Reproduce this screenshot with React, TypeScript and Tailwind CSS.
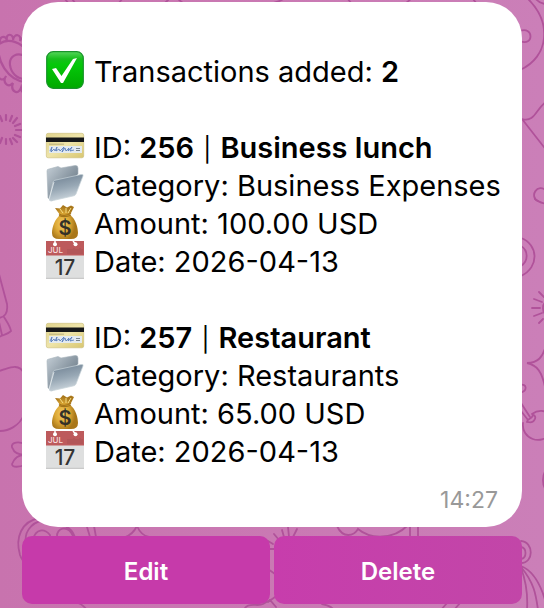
import type { ReactNode } from "react"

type IconName = "card" | "folder" | "bag" | "calendar"

const transactions = [
  { id: "256", name: "Business lunch", category: "Business Expenses", amount: "100.00 USD", date: "2026-04-13" },
  { id: "257", name: "Restaurant", category: "Restaurants", amount: "65.00 USD", date: "2026-04-13" },
]

function Wallpaper() {
  return (
    <svg
      className="absolute inset-0 h-full w-full"
      viewBox="0 0 544 608"
      preserveAspectRatio="none"
      fill="none"
      stroke="#b0529a"
      strokeWidth="1.8"
      strokeLinecap="round"
      aria-hidden="true"
    >
      {/* left side */}
      <path d="M-1 44C7 38 17 41 25 48M-1 44C-4 61 8 80 25 82M25 56C17 52 9 56 10 65C11 73 17 79 25 79" strokeWidth="2.2" />
      <path d="M0 43C-1 36 5 35 7 40C5 33 14 33 13 40C14 33 22 34 20 41C22 36 26 38 26 42M-2 72C-3 80 4 82 6 76C2 82 8 89 13 83C10 91 18 96 21 88C22 94 26 93 26 89" strokeWidth="2.2" />
      <path d="M6 115V120M12 116L10 121M17 118L13 123M20 124L15 126M22 130H16M20 137L15 135M17 142L13 138M12 144L10 139M6 144V139M0 116L2 121M0 143L2 138" strokeWidth="2.2" />
      <path d="M-1 274L7 304C8 312 5 317 -1 318M4 317C7 322 10 326 11 331C8 334 3 335 -1 337M-1 322L2 335M-1 371C8 369 18 362 24 373" />
      <path d="M24 415C19 426 9 431 -1 431M25 444C16 440 9 444 13 449C14 453 18 454 24 455C17 455 14 459 12 464C12 468 20 467 25 465" />
      <path d="M40 518C21 521 15 538 20 555C22 561 27 566 31 571M44 520C29 523 24 534 26 544M33 539C36 529 44 528 50 535C50 541 54 542 58 537M57 537C56 528 68 524 73 536M59 526C66 524 73 530 75 538M87 527L90 537M94 526L96 537M125 537C132 535 135 530 137 526C140 533 144 536 149 537" />
      {/* top edge */}
      <path d="M65 -1L69 4M72 -1L76 4M118 4L123 -2M165 3L170 -2M178 -1L184 4M261 3C272 5 279 2 285 -2M347 -2L352 4M405 4L412 -2M473 -1L477 4" />
      {/* right side */}
      <path d="M526 -3C553 22 549 57 520 70M520 31C534 26 534 47 520 41M547 101C536 108 535 123 522 119L547 151M547 191C537 182 529 197 538 201" />
      <path d="M535 -2C538 2 542 4 547 4M535 199C538 202 542 203 547 204M521 238C538 244 540 267 521 276M521 246C528 250 529 261 521 266" />
      <path d="M539 292L544 297M534 299L542 302M532 308H540M534 316L542 313M539 323L543 319M546 302C542 304 542 312 546 315" />
      <path d="M546 345C543 357 538 363 527 363C537 365 542 372 545 387M520 385C527 383 528 391 520 393" />
      <path d="M521 403L530 417M521 411L528 420M528 422C534 424 538 416 533 415C531 421 528 417 527 422M532 414C544 405 560 417 553 431C541 448 521 438 523 423M546 470C542 475 542 485 546 490" />
      <path d="M521 541C534 542 534 563 521 563M521 547C527 548 527 558 521 559M521 566C534 571 541 585 546 603M521 568C526 581 528 594 527 610M521 567C535 584 536 596 538 610" />
      {/* between the message and the keyboard, and below it */}
      <path d="M268 541L273 544M268 549H275M274 534L279 540M282 530L284 537M288 527L289 537M297 529L293 537M337 526C343 539 354 536 358 529C371 540 394 539 407 526M410 526V537M418 526V537" />
      <path d="M268 569L275 574M268 602L275 597M76 602C82 604 84 606 87 610M245 608C249 602 258 607 263 604L270 600L276 607M322 604C327 605 331 606 334 610M447 603L441 610M460 603L454 610" />
    </svg>
  )
}

function CheckIcon() {
  return (
    <svg className="size-[38px] shrink-0" viewBox="0 0 38 38" role="img" aria-label="Done">
      <defs>
        <linearGradient id="check-fill" x1="0" y1="0" x2="0" y2="1">
          <stop offset="0" stopColor="#55d65b" />
          <stop offset=".2" stopColor="#16be1c" />
          <stop offset=".35" stopColor="#05c80a" />
          <stop offset="1" stopColor="#00a900" />
        </linearGradient>
      </defs>
      <rect x=".7" y=".7" width="36.6" height="36.6" rx="6.5" fill="url(#check-fill)" stroke="#19942b" strokeWidth="1.2" />
      <path d="M6 18L10 17L15.5 25L27 8L31 7L17 32H15Z" fill="#fff" />
    </svg>
  )
}

function RowIcon({ name }: { name: IconName }) {
  return (
    <svg className="size-[38px] shrink-0 overflow-visible" viewBox="0 0 38 38" aria-hidden="true">
      {name === "card" && (
        <>
          <defs>
            <linearGradient id="card-fill" x1="0" y1="0" x2="1" y2="1">
              <stop offset="0" stopColor="#dfd28c" />
              <stop offset=".5" stopColor="#eee4a9" />
              <stop offset="1" stopColor="#d8c66f" />
            </linearGradient>
          </defs>
          <rect x=".3" y="6.3" width="37.4" height="24.5" rx="1.8" fill="url(#card-fill)" stroke="#c9bc78" strokeWidth=".6" />
          <path d="M0 10.5H38V15H0Z" fill="#151719" />
          <path d="M3 17.2H18" stroke="#a49b70" strokeWidth=".7" />
          <path d="M3 19H36V26H3Z" fill="#e3eaf0" />
          <path d="M4 24L6 20L5 25L8 22L9 24L11 20L10 24L13 22L14 24L18 20L16 25L19 21L20 24L23 21L22 24L26 20L24 24L28 23" fill="none" stroke="#4d75b8" strokeWidth=".8" />
          <path d="M30 21.5H34M30 23.5H34" stroke="#6f7980" strokeWidth=".9" />
        </>
      )}
      {name === "folder" && (
        <>
          <defs>
            <linearGradient id="folder-back" x1="0" y1="0" x2="1" y2="1">
              <stop offset="0" stopColor="#c4ced6" />
              <stop offset="1" stopColor="#526371" />
            </linearGradient>
            <linearGradient id="folder-front" x1=".3" y1="0" x2=".6" y2="1">
              <stop offset="0" stopColor="#718394" />
              <stop offset=".5" stopColor="#98a8b5" />
              <stop offset="1" stopColor="#d3dce2" />
            </linearGradient>
          </defs>
          <path d="M1 6Q1 4 3 4L12 1.5L15 3L29 .5Q32 0 32 3V9L6 36L2 33Z" fill="url(#folder-back)" stroke="#a7b3bc" strokeWidth=".6" />
          <path d="M7 17Q8 15 10 15L35 9.5Q38 9 37 11L30 29Q29 31 27 31L5 36Q3 36 3.5 34Z" fill="url(#folder-front)" stroke="#c7d2d9" strokeWidth=".7" />
          <path d="M3 34L8 17" stroke="#e8edf0" strokeWidth=".8" />
        </>
      )}
      {name === "bag" && (
        <>
          <defs>
            <radialGradient id="bag-fill" cx=".4" cy=".55">
              <stop offset="0" stopColor="#f4cc61" />
              <stop offset=".55" stopColor="#dda936" />
              <stop offset="1" stopColor="#a9771a" />
            </radialGradient>
          </defs>
          <path d="M9 5L14 5.5L17 2L21 4.5L25 2.5L28 4L24 12C30 16 32 25 32 30Q32 36 25 36H13Q6 36 6 30C6 24 9 16 14 12Z" fill="url(#bag-fill)" />
          <path d="M13 11Q19 14 25 10M13 12.5Q19 15 25 12" stroke="#a47418" strokeWidth="1.2" fill="none" />
          <path d="M14 6L17 10M20 5V10M25 5L22 10" stroke="#f8df85" strokeWidth="1" />
          <text x="19" y="31.5" textAnchor="middle" fill="#343128" className="font-['Inter',sans-serif] text-[20px] font-semibold">$</text>
        </>
      )}
      {name === "calendar" && (
        <>
          <path d="M0 0H38V38H0Z" fill="#dedfdf" />
          <path d="M0 0H38V14.5H0Z" fill="#bd5a5c" />
          <path d="M0 37.3H38" stroke="#c4c4c4" />
          <path d="M22 8V13M24 8V13M26 8V13M28 7V13M30 8V13M32 8V13M34 7V13M36 8V13" stroke="#9c4d50" strokeWidth=".6" />
          <circle cx="9" cy="3.2" r="2" fill="#fff" />
          <circle cx="29.5" cy="3.2" r="2" fill="#fff" />
          <path d="M9 0V3M27 0L29.5 3" stroke="#fff" strokeWidth="1.4" />
          <text x="2" y="12" fill="#f7dede" className="font-['Inter',sans-serif] text-[8px] font-medium">JUL</text>
          <text x="19" y="34" textAnchor="middle" fill="#343434" className="font-['Inter',sans-serif] text-[21px] font-medium">17</text>
        </>
      )}
    </svg>
  )
}

function Row({ icon, children }: { icon: ReactNode; children: ReactNode }) {
  return (
    <div className="flex h-[38px] gap-2.5 whitespace-nowrap">
      {icon}
      <p>{children}</p>
    </div>
  )
}

export default function App() {
  return (
    <main className="relative min-h-screen overflow-hidden bg-linear-to-r from-[#c873ae] to-[#cb7fb8] px-[22px] pt-0.5 pb-1 font-['Inter','Liberation_Sans',sans-serif]">
      <Wallpaper />
      <div className="relative">
        <article className="rounded-[36px] bg-white px-6 pt-[49px] pb-[13px] text-[29px] leading-[42px] text-black">
          <Row icon={<CheckIcon />}>
            Transactions added: <strong className="font-semibold">2</strong>
          </Row>
          {transactions.map((item) => (
            <section key={item.id} className="mt-[38px]">
              <Row icon={<RowIcon name="card" />}>
                ID: <strong className="font-semibold">{item.id}</strong>{" "}
                <span className="px-px text-2xl leading-none">|</span>{" "}
                <strong className="font-semibold">{item.name}</strong>
              </Row>
              <Row icon={<RowIcon name="folder" />}>Category: {item.category}</Row>
              <Row icon={<RowIcon name="bag" />}>Amount: {item.amount}</Row>
              <Row icon={<RowIcon name="calendar" />}>Date: {item.date}</Row>
            </section>
          ))}
          <time className="mt-[17px] block text-right text-[23px] leading-7 text-[#999]">14:27</time>
        </article>
        <div className="mt-[9px] grid grid-cols-2 gap-1 text-2xl font-semibold text-white">
          <button type="button" className="h-[68px] rounded-[10px] bg-[#c63aaa] pt-1">
            Edit
          </button>
          <button type="button" className="h-[68px] rounded-[10px] bg-linear-to-r from-[#c73dac] to-[#c246a8] pt-1">
            Delete
          </button>
        </div>
      </div>
    </main>
  )
}
